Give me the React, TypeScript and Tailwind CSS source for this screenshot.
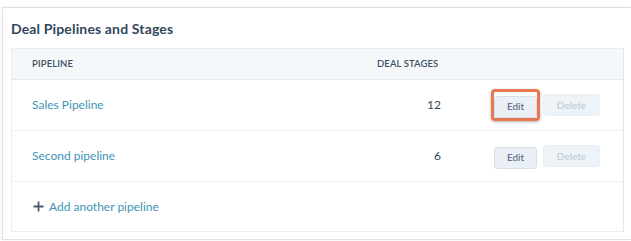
import React from 'react'

const pipelines = [
    { name: 'Sales Pipeline', stages: 12, highlight: true },
    { name: 'Second pipeline', stages: 6, highlight: false },
]

export default function App() {
    return (
        <div className="w-[631px] h-[241px] bg-white overflow-hidden" style={{ fontFamily: 'Lato, "Open Sans", sans-serif' }}>
            <div className="h-[7px]" />
            <div className="ml-[2px] h-[233px] border-l border-t border-b border-[#dde2e8] bg-white shadow-[0_0_3px_rgba(0,0,0,0.06)] pl-[8px] pr-[6px]">
                {/* Title */}
                <div className="h-[40px] flex items-center pt-[1px]">
                    <h2 className="text-[14px] font-bold text-[#33475b] tracking-[0.15px]">Deal Pipelines and Stages</h2>
                </div>

                {/* Table */}
                <div className="w-[613px] border border-[#eaeef2] border-r-[#e4e8ed]">
                    <div className="h-[31px] flex items-center bg-[#f5f8fa] border-b border-[#e6eaee] text-[9.5px] font-semibold text-[#3d4f63] tracking-[0.1px]">
                        <div className="pl-[20px] flex-1">PIPELINE</div>
                        <div className="w-[90px] pl-[26px] whitespace-nowrap">DEAL STAGES</div>
                        <div className="w-[182px]" />
                    </div>

                    {pipelines.map((p) => (
                        <div key={p.name} className="h-[51px] flex items-center border-b border-[#eef1f4]">
                            <div className="pl-[20px] flex-1 text-[12px] text-[#3e94b6]">{p.name}</div>
                            <div className="w-[90px] text-right text-[12px] text-[#33475b]">{p.stages}</div>
                            <div className="w-[182px] flex items-center pl-[53px] gap-[6px]">
                                <div className={p.highlight ? 'rounded-[4px] border-[3px] border-[#e97852] shadow-[0_1px_3px_rgba(0,0,0,0.3)] -m-[3px]' : ''}>
                                    <button className="w-[43px] h-[22px] rounded-[3px] bg-[#eaf0f6] border border-[#d6e0ea] text-[10px] text-[#4f6278]">Edit</button>
                                </div>
                                <button className="w-[57px] h-[22px] rounded-[3px] bg-[#eef3f7] border border-[#eaf0f5] text-[10px] text-[#b9c7d6]">Delete</button>
                            </div>
                        </div>
                    ))}

                    <div className="h-[49px] flex items-center pl-[21px] text-[12px] text-[#3e94b6]">
                        <svg width="11" height="11" viewBox="0 0 11 11" className="mr-[5px]">
                            <path d="M5.5 0.5v10M0.5 5.5h10" stroke="#4a5d72" strokeWidth="1.8" />
                        </svg>
                        Add another pipeline
                    </div>
                </div>
            </div>
        </div>
    )
}
